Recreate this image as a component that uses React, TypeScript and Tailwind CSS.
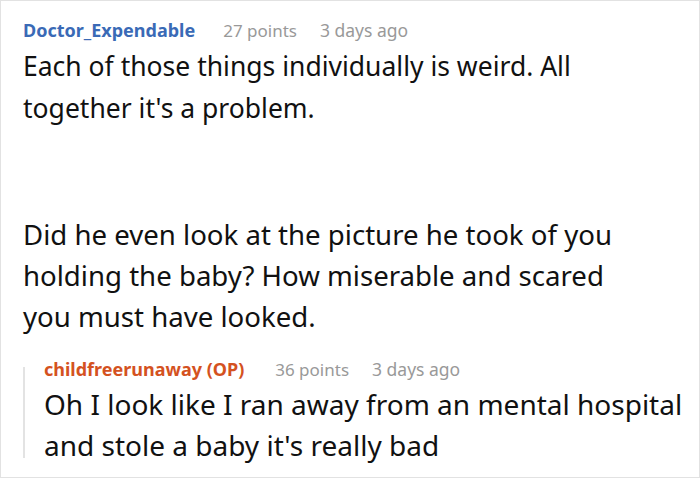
import React from "react";

const FONT = { fontFamily: '"Noto Sans", "Open Sans", sans-serif' };

function Meta({
  name,
  points,
  when,
  color,
  gap,
}: {
  name: string;
  points: string;
  when: string;
  color: string;
  gap: string;
}) {
  return (
    <div className="flex items-baseline h-[22px] leading-[22px] whitespace-nowrap">
      <span className={`text-[18px] font-bold ${color}`}>{name}</span>
      <span className={`${gap} text-[17px] text-[#999]`}>{points}</span>
      <span className="ml-[23px] text-[17.5px] text-[#999]">{when}</span>
    </div>
  );
}

export default function App() {
  return (
    <div style={FONT} className="w-[700px] h-[478px] bg-white border border-[#e2e2e2] overflow-hidden text-[#111]">
      <div className="pl-[22px] pt-[18px]">
        {/* top comment */}
        <Meta name="Doctor_Expendable" points="27 points" when="3 days ago" color="text-[#3a6ab6]" gap="ml-[28px]" />
        <div className="mt-[4px] w-[610px]">
          <p className="text-[26.5px] leading-[42px]">Each of those things individually is weird. All together it's a problem.</p>
          <p className="mt-[85px] text-[27.6px] leading-[41px]">
            Did he even look at the picture he took of you holding the baby? How miserable and scared you must have looked.
          </p>
        </div>

        {/* reply */}
        <div className="mt-[21px] flex">
          <div className="mt-[9px] w-[2px] h-[91px] bg-[#e3e3e3] shrink-0" />
          <div className="pl-[19px]">
            <Meta name="childfreerunaway (OP)" points="36 points" when="3 days ago" color="text-[#d4521f]" gap="ml-[31px]" />
            <p className="mt-[4px] text-[28px] leading-[41px] pr-[6px]">
              Oh I look like I ran away from an mental hospital and stole a baby it's really bad
            </p>
          </div>
        </div>
      </div>
    </div>
  );
}
